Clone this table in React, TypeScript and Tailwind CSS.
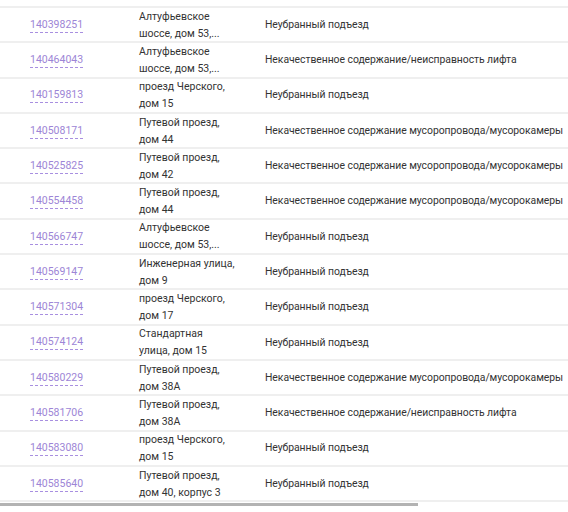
const rows = [
  { id: "140398251", addr: ["Алтуфьевское", "шоссе, дом 53,..."], desc: "Неубранный подъезд" },
  { id: "140464043", addr: ["Алтуфьевское", "шоссе, дом 53,..."], desc: "Некачественное содержание/неисправность лифта" },
  { id: "140159813", addr: ["проезд Черского,", "дом 15"], desc: "Неубранный подъезд" },
  { id: "140508171", addr: ["Путевой проезд,", "дом 44"], desc: "Некачественное содержание мусоропровода/мусорокамеры" },
  { id: "140525825", addr: ["Путевой проезд,", "дом 42"], desc: "Некачественное содержание мусоропровода/мусорокамеры" },
  { id: "140554458", addr: ["Путевой проезд,", "дом 44"], desc: "Некачественное содержание мусоропровода/мусорокамеры" },
  { id: "140566747", addr: ["Алтуфьевское", "шоссе, дом 53,..."], desc: "Неубранный подъезд" },
  { id: "140569147", addr: ["Инженерная улица,", "дом 9"], desc: "Неубранный подъезд" },
  { id: "140571304", addr: ["проезд Черского,", "дом 17"], desc: "Неубранный подъезд" },
  { id: "140574124", addr: ["Стандартная", "улица, дом 15"], desc: "Неубранный подъезд" },
  { id: "140580229", addr: ["Путевой проезд,", "дом 38А"], desc: "Некачественное содержание мусоропровода/мусорокамеры" },
  { id: "140581706", addr: ["Путевой проезд,", "дом 38А"], desc: "Некачественное содержание/неисправность лифта" },
  { id: "140583080", addr: ["проезд Черского,", "дом 15"], desc: "Неубранный подъезд" },
  { id: "140585640", addr: ["Путевой проезд,", "дом 40, корпус 3"], desc: "Неубранный подъезд" },
];

export default function App() {
  return (
    <div className="w-[568px] h-[512px] bg-white overflow-hidden font-['Roboto',sans-serif] text-[10.5px] text-[#333]">
      <div className="h-[6px]" />
      <div className="border-t-2 border-[#efefef]">
        {rows.map((r) => (
          <div key={r.id} className="flex items-center h-[35.3px] border-b-2 border-[#efefef]">
            <div className="w-[139px] pl-[30px] shrink-0">
              <span className="text-[#9d85d6] border-b border-dashed border-[#a88fe0] leading-[14px] pb-[1px]">
                {r.id}
              </span>
            </div>
            <div className="w-[126px] shrink-0 leading-[17px]">
              <div>{r.addr[0]}</div>
              <div>{r.addr[1]}</div>
            </div>
            <div className="whitespace-nowrap text-[10.4px] tracking-[-0.05px]">{r.desc}</div>
          </div>
        ))}
      </div>
      <div className="h-[1px]" />
      <div className="w-[418px] h-[3px] bg-[#b3b3b3]" />
    </div>
  );
}
